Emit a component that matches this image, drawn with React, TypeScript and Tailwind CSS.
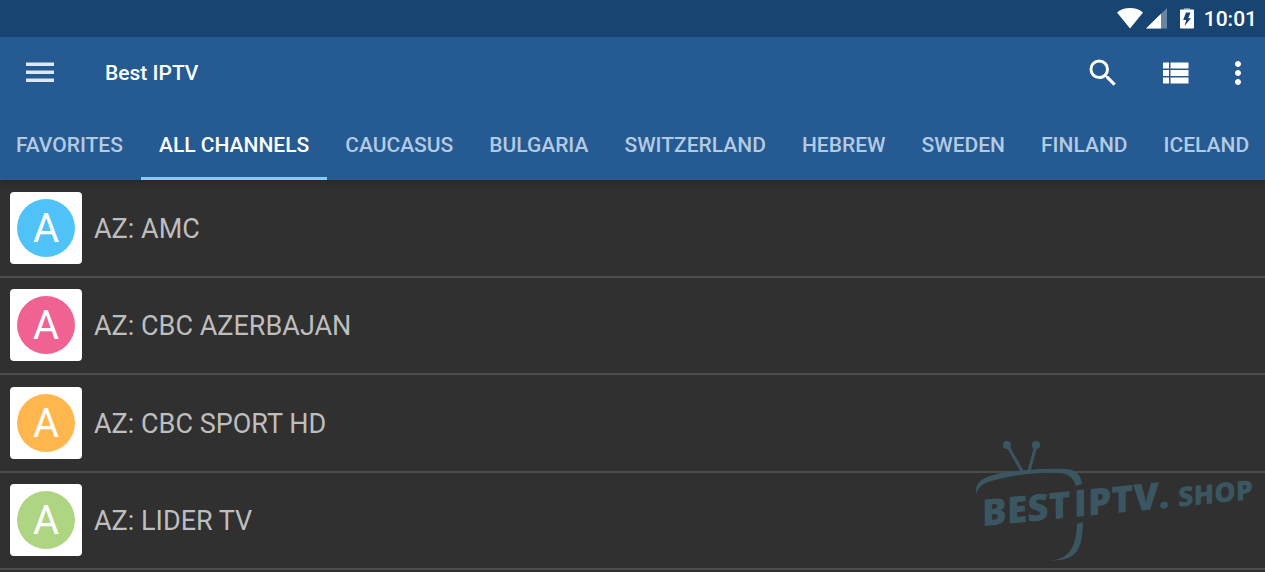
import { useState } from "react";

const tabs = [
  "Favorites",
  "All channels",
  "Caucasus",
  "Bulgaria",
  "Switzerland",
  "Hebrew",
  "Sweden",
  "Finland",
  "Iceland",
];

const channels = [
  { name: "AZ: AMC", color: "bg-[#4fc3f7]" },
  { name: "AZ: CBC AZERBAJAN", color: "bg-[#f06292]" },
  { name: "AZ: CBC SPORT HD", color: "bg-[#ffb74d]" },
  { name: "AZ: LIDER TV", color: "bg-[#aed581]" },
];

function StatusBar() {
  return (
    <div className="flex h-[37px] items-center justify-end bg-[#174470] pr-2 text-white">
      {/* Wifi */}
      <svg width="26" height="22" viewBox="0 0 26 22" fill="currentColor">
        <path d="M0 4.500C3.500 1.200 8 0 13 0s9.500 1.200 13 4.500L13 20.500z" />
      </svg>
      {/* Signal */}
      <svg width="21" height="22" viewBox="0 0 21 22" fill="currentColor" className="ml-[3px]">
        <path d="M21 0v20.500H0z" opacity="0.35" />
        <path d="M15 5.800v14.700H0z" />
      </svg>
      {/* Battery */}
      <svg width="14" height="22" viewBox="0 0 14 22" fill="currentColor" className="ml-[13px]">
        <path d="M4 0h6v2H4z" opacity="0.4" />
        <path
          fillRule="evenodd"
          d="M1 1.500h12q1 0 1 1v17q0 1-1 1H1q-1 0-1-1v-17q0-1 1-1zM6 4.500L3.200 12h3L4.500 18 11 10.200H8.300L10.500 4.500z"
        />
      </svg>
      <span className="ml-[10px] text-[21px] leading-6 font-medium">10:01</span>
    </div>
  );
}

function Toolbar() {
  return (
    <div className="flex h-[72px] items-center text-white">
      <button type="button" aria-label="Menu" className="flex h-full w-20 items-center justify-center">
        <svg width="28" height="22" viewBox="0 0 28 22" fill="#dbe8f5">
          <path d="M0 .5h28v3.500H0zM0 8.500h28V12H0zM0 16.500h28V20H0z" />
        </svg>
      </button>
      <h1 className="ml-[25px] flex-1 text-[21px] leading-6 font-medium">Best IPTV</h1>
      <button type="button" aria-label="Search" className="flex h-full w-[72px] items-center justify-center">
        <svg width="36" height="36" viewBox="0 0 24 24" fill="currentColor">
          <path d="M15.500 14h-.79l-.28-.27A6.471 6.471 0 0 0 16 9.500 6.500 6.500 0 1 0 9.500 16c1.610 0 3.090-.59 4.230-1.570l.27.28v.79l5 4.990L20.490 19l-4.990-5zm-6 0C7.010 14 5 11.990 5 9.500S7.010 5 9.500 5 14 7.010 14 9.500 11.990 14 9.500 14z" />
        </svg>
      </button>
      <button type="button" aria-label="List view" className="flex h-full w-[72px] items-center justify-center">
        <svg width="36" height="36" viewBox="0 0 24 24" fill="currentColor">
          <path d="M4 14h4v-4H4v4zm0 5h4v-4H4v4zM4 9h4V5H4v4zm5 5h12v-4H9v4zm0 5h12v-4H9v4zM9 5v4h12V5H9z" />
        </svg>
      </button>
      <button type="button" aria-label="More options" className="flex h-full w-[54px] items-center justify-center">
        <svg width="36" height="36" viewBox="0 0 24 24" fill="currentColor">
          <path d="M12 8c1.100 0 2-.9 2-2s-.9-2-2-2-2 .9-2 2 .9 2 2 2zm0 2c-1.100 0-2 .9-2 2s.9 2 2 2 2-.9 2-2-.9-2-2-2zm0 6c-1.100 0-2 .9-2 2s.9 2 2 2 2-.9 2-2-.9-2-2-2z" />
        </svg>
      </button>
    </div>
  );
}

function Watermark() {
  return (
    <svg
      width="290"
      height="130"
      viewBox="0 0 290 130"
      className="pointer-events-none absolute right-0 bottom-1 text-[#3a5661]"
      fill="currentColor"
    >
      {/* Antenna */}
      <circle cx="32" cy="7" r="4" />
      <circle cx="61" cy="7" r="4" />
      <path d="M32 7L47 33M61 7L54 33" stroke="currentColor" strokeWidth="3" />
      {/* TV frame */}
      <path d="M1 56C0 44 8 38 28 35C50 31 78 30 92 31C101 32 106 37 107 46L101 48C98 39 92 35 84 35C68 34 42 36 24 41C10 44 4 47 1 56z" />
      <path d="M108 84C107 111 103 123 75 122.500C94 121 101 110 102 86z" />
      {/* The I stands alone as part of the frame */}
      <g className="font-['Open_Sans','Noto_Sans',sans-serif] font-extrabold" transform="skewY(-5.700)">
        <text x="7" y="89" fontSize="37">BEST</text>
        <text x="99" y="89" fontSize="37">I</text>
        <text x="113" y="89" fontSize="37">PTV.</text>
        <text x="203" y="89" fontSize="27">SHOP</text>
      </g>
    </svg>
  );
}

export default function App() {
  const [activeTab, setActiveTab] = useState("All channels");

  return (
    <div className="relative min-h-screen overflow-hidden bg-[#303030] font-['Roboto',sans-serif]">
      <header className="relative bg-[#255a92] shadow-md">
        <StatusBar />
        <Toolbar />
        <nav className="-ml-0.5 flex h-[71px] overflow-hidden">
          {tabs.map((tab) => (
            <button
              key={tab}
              type="button"
              onClick={() => setActiveTab(tab)}
              className={`shrink-0 border-b-3 px-[18px] pt-[3px] text-[21px] leading-6 font-medium whitespace-nowrap uppercase ${
                tab === activeTab
                  ? "border-[#81cfff] text-white"
                  : "border-transparent text-[#b4cae2]"
              }`}
            >
              {tab}
            </button>
          ))}
        </nav>
      </header>

      <main>
        <ul className="grid h-[390px] grid-rows-4">
          {channels.map((channel) => (
            <li key={channel.name} className="flex items-center gap-3 border-b-2 border-[#4b4b4b] px-2.5">
              <div className="flex size-[72px] items-center justify-center rounded bg-white">
                <div
                  className={`flex size-[58px] items-center justify-center rounded-full pt-0.5 text-[40px] leading-none text-white ${channel.color}`}
                >
                  A
                </div>
              </div>
              <span className="pt-0.5 text-[27px] leading-8 text-[#bebebe]">{channel.name}</span>
            </li>
          ))}
        </ul>
      </main>

      <Watermark />
    </div>
  );
}
